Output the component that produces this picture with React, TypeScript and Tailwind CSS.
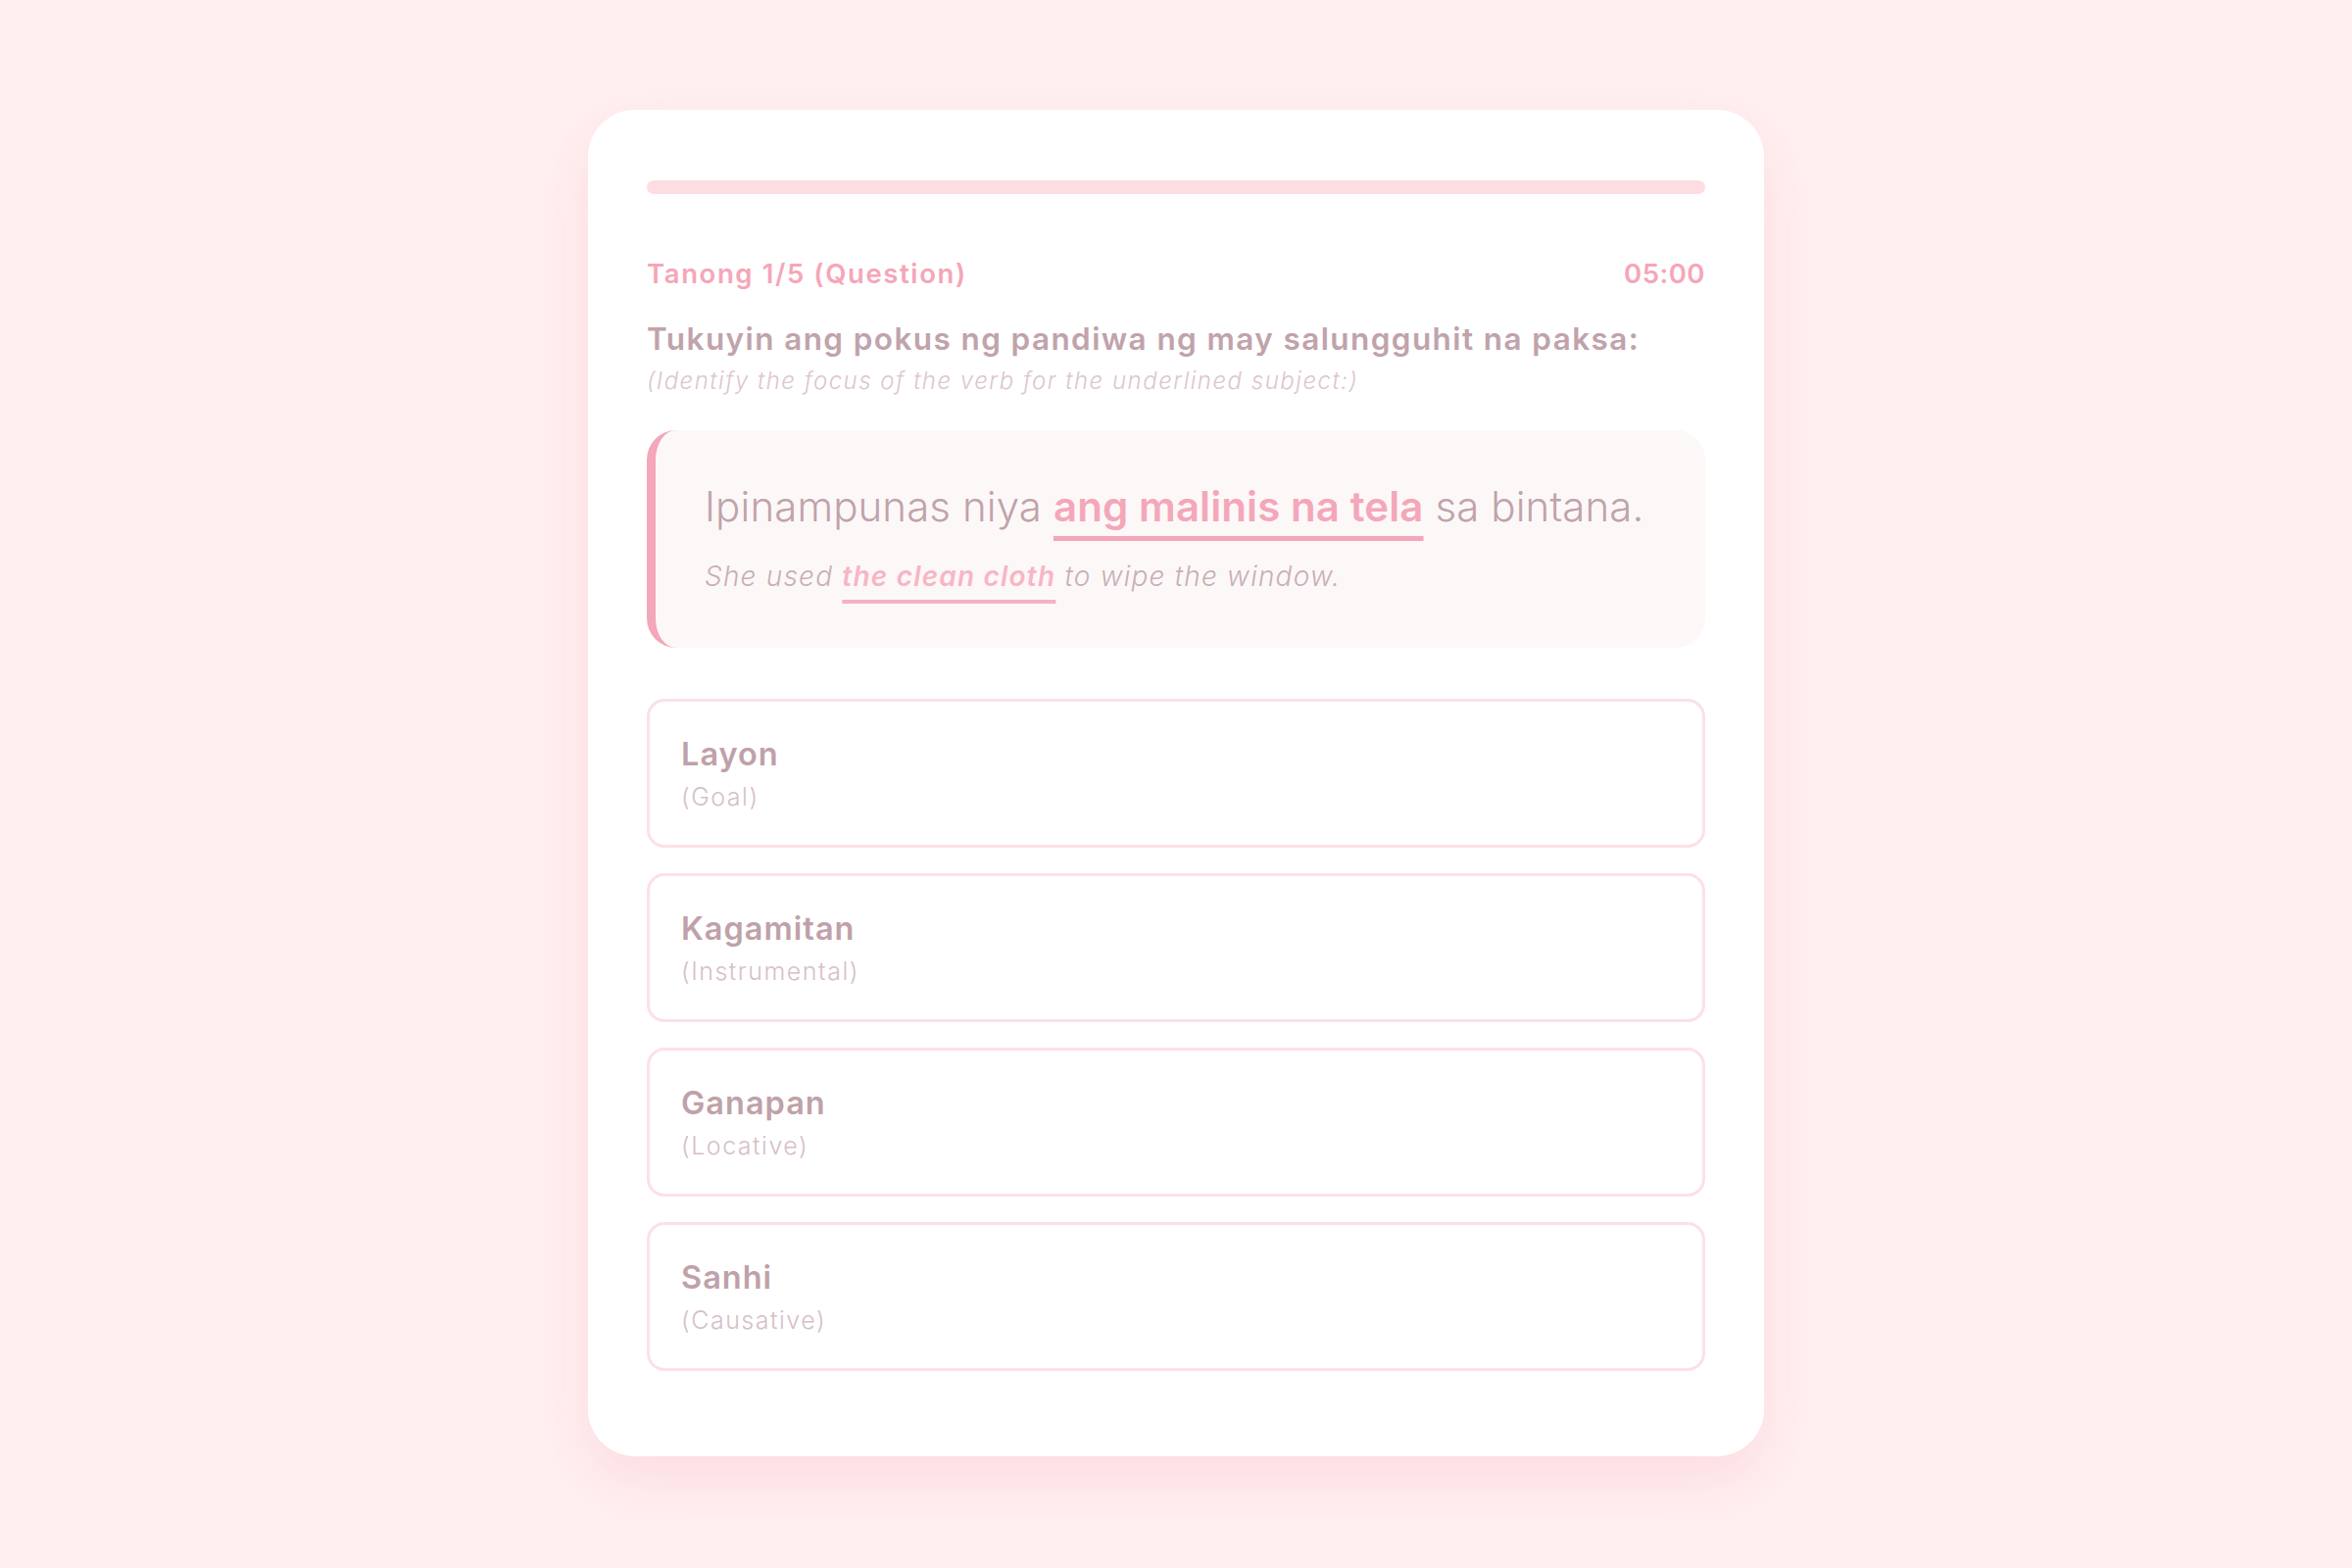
import React from 'react';

const options = [
  { title: 'Layon', sub: '(Goal)' },
  { title: 'Kagamitan', sub: '(Instrumental)' },
  { title: 'Ganapan', sub: '(Locative)' },
  { title: 'Sanhi', sub: '(Causative)' },
];

const font = { fontFamily: 'Inter, "Open Sans", sans-serif' };

const App: React.FC = () => {
  return (
    <div className="min-h-screen w-full bg-[#fff0f0] flex justify-center pt-[112px]" style={font}>
      <div className="w-[1200px] h-fit bg-white rounded-[48px] px-[60px] pt-[72px] pb-[87px] shadow-[0_24px_60px_rgba(244,167,185,0.28)]">
        <div className="h-[14px] w-full rounded-full bg-[#fddde2]" />

        <div className="mt-[62px] flex justify-between items-center text-[27.5px] leading-[39px] font-semibold text-[#f5a6b8]">
          <span className="tracking-[1.6px]">Tanong 1/5 (Question)</span>
          <span className="tracking-[0.5px]">05:00</span>
        </div>

        <p className="mt-[24px] text-[31.5px] leading-[45px] font-semibold tracking-[1.4px] text-[#c0a3ab]">
          Tukuyin ang pokus ng pandiwa ng may salungguhit na paksa:
        </p>
        <p className="mt-[3px] text-[24px] leading-[35px] font-light italic tracking-[1.5px] text-[#dcc6cc]">
          (Identify the focus of the verb for the underlined subject:)
        </p>

        <div className="mt-[33px] rounded-[30px] border-l-[9px] border-[#f4a7b9] bg-[#fdf8f8] pl-[50px] pr-[40px] pt-[48px] pb-[53px]">
          <p className="text-[42px] leading-[60px] font-light tracking-[0.1px] text-[#c0a3aa]">
            Ipinampunas niya{' '}
            <span className="font-semibold text-[#f4a7b9] underline decoration-[5px] underline-offset-[15px] [text-decoration-skip-ink:none] decoration-[#f4a7b9]">
              ang malinis na tela
            </span>{' '}
            sa bintana.
          </p>
          <p className="mt-[21px] text-[28px] leading-[40px] font-light italic tracking-[1.2px] text-[#c9afb6]">
            She used{' '}
            <span className="font-semibold text-[#f7b6c4] underline decoration-[4px] underline-offset-[14px] [text-decoration-skip-ink:none] decoration-[#f4b3c1]">
              the clean cloth
            </span>{' '}
            to wipe the window.
          </p>
        </div>

        <div className="mt-[52px] flex flex-col gap-[26px]">
          {options.map((o) => (
            <div
              key={o.title}
              className="h-[152px] rounded-[18px] border-[3px] border-[#fde0e5] bg-white px-[32px] py-[31px]"
            >
              <div className="text-[32.5px] leading-[46px] font-semibold tracking-[1px] text-[#bfa1a9]">{o.title}</div>
              <div className="mt-[2px] text-[25px] leading-[36px] font-light tracking-[1.5px] text-[#d6c0c6]">{o.sub}</div>
            </div>
          ))}
        </div>
      </div>
    </div>
  );
};

export default App;
